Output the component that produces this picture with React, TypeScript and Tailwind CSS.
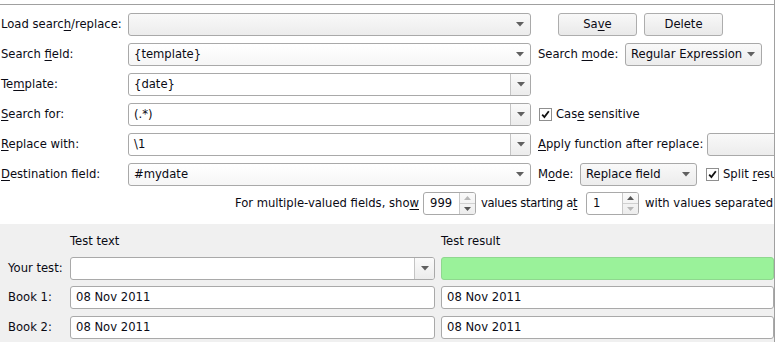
import React from "react";

const Arrow = ({ light }: { light?: boolean }) => (
  <svg width="8" height="5" viewBox="0 0 8 5" className="block shrink-0">
    <path d="M0 0 L8 0 L4 4.5 Z" fill={light ? "#b5b5b5" : "#606060"} />
  </svg>
);

const U = ({ children }: { children: React.ReactNode }) => <span className="underline underline-offset-2">{children}</span>;

const Combo = ({ text, w, grad, className = "" }: { text?: string; w: number; grad?: boolean; className?: string }) => (
  <div
    className={`h-[23px] shrink-0 flex items-center border border-[#a9a9a9] rounded-[3px] pl-[5px] pr-[6px] ${grad ? "bg-gradient-to-b from-[#f9f9f9] to-[#ececec]" : "bg-gradient-to-b from-[#ffffff] to-[#f6f6f6]"} ${className}`}
    style={{ width: w }}
  >
    <span className="flex-1 whitespace-nowrap leading-normal">{text}</span>
    <Arrow />
  </div>
);

const ComboBtn = ({ text, w, bg = "bg-white" }: { text?: string; w: number; bg?: string }) => (
  <div className={`h-[23px] shrink-0 flex border border-[#a9a9a9] rounded-[3px] ${bg}`} style={{ width: w }}>
    <div className="flex-1 flex items-center pl-[5px] whitespace-nowrap leading-normal">{text}</div>
    <div className="w-[20px] border-l border-[#c4c4c4] rounded-r-[2px] flex items-center justify-center bg-gradient-to-b from-[#fafafa] to-[#ececec]">
      <Arrow />
    </div>
  </div>
);

const Check = () => (
  <div className="w-[13px] h-[13px] shrink-0 border border-[#8f8f8f] bg-white flex items-center justify-center">
    <svg width="9" height="9" viewBox="0 0 9 9">
      <path d="M1.2 4.6 L3.4 7 L7.8 1.2" stroke="#111" strokeWidth="1.8" fill="none" />
    </svg>
  </div>
);

const Button = ({ children, className = "" }: { children: React.ReactNode; className?: string }) => (
  <div className={`h-[23px] w-[79px] shrink-0 flex items-center justify-center border border-[#adadad] rounded-[3px] bg-gradient-to-b from-[#f8f8f8] to-[#e9e9e9] leading-normal ${className}`}>
    {children}
  </div>
);

const Spin = ({ value, upLight, downLight }: { value: string; upLight?: boolean; downLight?: boolean }) => (
  <div className="h-[23px] w-[53px] shrink-0 flex border border-[#a9a9a9] rounded-[3px] bg-white">
    <div className="flex-1 flex items-center pl-[6px] leading-normal">{value}</div>
    <div className="w-[16px] border-l border-[#c8c8c8] rounded-r-[2px] flex flex-col bg-gradient-to-b from-[#fafafa] to-[#ededed]">
      <div className="flex-1 flex items-center justify-center">
        <svg width="7" height="4" viewBox="0 0 7 4"><path d="M0 4 L7 4 L3.5 0 Z" fill={upLight ? "#b8b8b8" : "#555"} /></svg>
      </div>
      <div className="h-px bg-[#d0d0d0]" />
      <div className="flex-1 flex items-center justify-center">
        <svg width="7" height="4" viewBox="0 0 7 4"><path d="M0 0 L7 0 L3.5 4 Z" fill={downLight ? "#b8b8b8" : "#555"} /></svg>
      </div>
    </div>
  </div>
);

const Field = ({ text, className = "" }: { text: string; className?: string }) => (
  <div className={`h-[23px] border border-[#a9a9a9] rounded-[3px] bg-white flex items-center pl-[5px] leading-normal ${className}`}>{text}</div>
);

export default function App() {
  return (
    <div
      className="w-[779px] h-[342px] bg-white overflow-hidden text-[11.6px] text-[#0a0a14] leading-normal"
      style={{ fontFamily: '"DejaVu Sans", Verdana, sans-serif' }}
    >
      <div className="w-[775px] h-full border-r border-[#a0a0a0] flex flex-col overflow-hidden">
        <div className="h-[4px] shrink-0" />
        <div className="h-[220px] shrink-0 border-t border-[#a0a0a0] bg-white flex flex-col gap-[7px] pt-[8px] overflow-hidden">
          {/* row 1 */}
          <div className="flex items-center h-[23px]">
            <div className="w-[128px] shrink-0 pl-[1px] whitespace-nowrap">Load searc<U>h</U>/replace:</div>
            <Combo w={403} grad />
            <Button className="ml-[27px]">Sa<U>v</U>e</Button>
            <Button className="ml-[7px]">Delete</Button>
          </div>
          {/* row 2 */}
          <div className="flex items-center h-[23px]">
            <div className="w-[128px] shrink-0 pl-[1px] whitespace-nowrap">Search <U>f</U>ield:</div>
            <Combo w={403} text="{template}" />
            <div className="w-[94px] shrink-0 pl-[7px] whitespace-nowrap">Search <U>m</U>ode:</div>
            <Combo w={137} text="Regular Expression" grad />
          </div>
          {/* row 3 */}
          <div className="flex items-center h-[23px]">
            <div className="w-[128px] shrink-0 pl-[1px] whitespace-nowrap">Te<U>m</U>plate:</div>
            <ComboBtn w={403} text="{date}" />
          </div>
          {/* row 4 */}
          <div className="flex items-center h-[23px]">
            <div className="w-[128px] shrink-0 pl-[1px] whitespace-nowrap"><U>S</U>earch for:</div>
            <ComboBtn w={403} text="(.*)" />
            <div className="ml-[8px]"><Check /></div>
            <div className="ml-[4px] whitespace-nowrap">Cas<U>e</U> sensitive</div>
          </div>
          {/* row 5 */}
          <div className="flex items-center h-[23px]">
            <div className="w-[128px] shrink-0 pl-[1px] whitespace-nowrap"><U>R</U>eplace with:</div>
            <ComboBtn w={403} text="\1" />
            <div className="w-[176px] shrink-0 pl-[7px] whitespace-nowrap"><U>A</U>pply function after replace:</div>
            <Combo w={120} grad />
          </div>
          {/* row 6 */}
          <div className="flex items-center h-[23px]">
            <div className="w-[128px] shrink-0 pl-[1px] whitespace-nowrap"><U>D</U>estination field:</div>
            <Combo w={403} text="#mydate" />
            <div className="w-[49px] shrink-0 pl-[7px] whitespace-nowrap">M<U>o</U>de:</div>
            <Combo w={117} text="Replace field" grad />
            <div className="ml-[9px]"><Check /></div>
            <div className="ml-[4px] whitespace-nowrap">Split <U>r</U>esult</div>
          </div>
          {/* row 7 */}
          <div className="flex items-center h-[23px] -mt-[1px]">
            <div className="w-[419px] shrink-0 text-right whitespace-nowrap">For multiple-valued fields, sho<U>w</U></div>
            <div className="ml-[4px]"><Spin value="999" upLight /></div>
            <div className="w-[110px] shrink-0 pl-[5px] whitespace-nowrap tracking-[-0.3px]">values starting a<U>t</U></div>
            <Spin value="1" downLight />
            <div className="pl-[6px] whitespace-nowrap">with values separated by</div>
          </div>
        </div>
        {/* bottom */}
        <div className="flex-1 bg-[#f0f0f0] flex flex-col">
          <div className="h-[33px] flex items-end pb-[7px] shrink-0">
            <div className="w-[70px] shrink-0" />
            <div className="w-[371px] shrink-0">Test text</div>
            <div>Test result</div>
          </div>
          <div className="flex flex-col gap-[6px]">
            <div className="flex items-center h-[23px]">
              <div className="w-[70px] shrink-0 pl-[8px] whitespace-nowrap">Your test:</div>
              <ComboBtn w={365} />
              <div className="ml-[6px] h-[23px] flex-1 border border-[#8fd88f] rounded-[3px] bg-[#9af29a]" />
            </div>
            <div className="flex items-center h-[23px]">
              <div className="w-[70px] shrink-0 pl-[8px] whitespace-nowrap">Book 1:</div>
              <Field text="08 Nov 2011" className="w-[365px]" />
              <Field text="08 Nov 2011" className="ml-[6px] flex-1" />
            </div>
            <div className="flex items-center h-[23px] mt-[1px]">
              <div className="w-[70px] shrink-0 pl-[8px] whitespace-nowrap">Book 2:</div>
              <Field text="08 Nov 2011" className="w-[365px]" />
              <Field text="08 Nov 2011" className="ml-[6px] flex-1" />
            </div>
          </div>
        </div>
      </div>
    </div>
  );
}
